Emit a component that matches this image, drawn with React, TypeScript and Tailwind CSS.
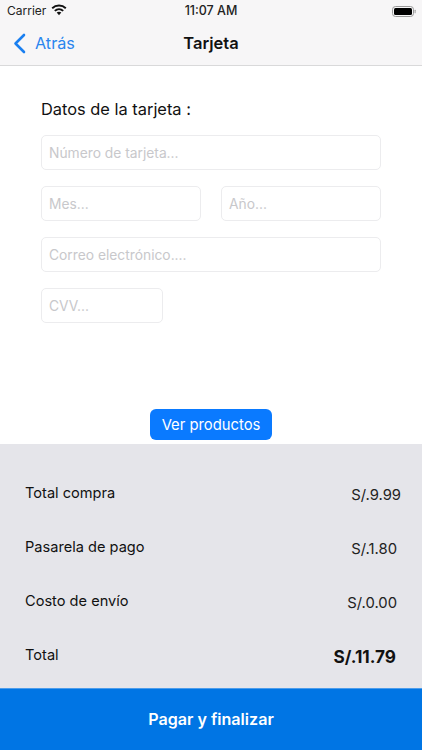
const font = { fontFamily: 'Inter, "Liberation Sans", sans-serif' };

function Field({ label, className }: { label: string; className: string }) {
  return (
    <div className={`h-[35px] rounded-[5px] border border-[#ececee] bg-white pl-[7px] pt-[2px] flex items-center text-[13.8px] text-[#c8c8cb] ${className}`}>
      {label}
    </div>
  );
}

function Row({ label, value, pr, bold, mt }: { label: string; value: string; pr: string; bold?: boolean; mt: string }) {
  return (
    <div className={`h-[24px] flex items-center justify-between pl-[25px] ${pr} ${mt}`}>
      <span className="text-[14.6px] text-[#111] translate-y-[1px]">{label}</span>
      <span className={bold ? "text-[17.2px] font-bold text-[#111] translate-y-[2px]" : "text-[14.8px] text-[#222] translate-y-[2px]"}>{value}</span>
    </div>
  );
}

export default function App() {
  return (
    <div style={font} className="w-[422px] h-[750px] overflow-hidden flex flex-col bg-white">
      <header className="h-[66px] shrink-0 bg-[#f7f6f7] border-b border-[#d9d9da] flex flex-col">
        <div className="h-[22px] flex items-center justify-between pl-[7px] pr-[6px] relative">
          <div className="flex items-center gap-[5px]">
            <span className="text-[12px] text-[#222]">Carrier</span>
            <svg width="16" height="12" viewBox="0 0 16 12" fill="none" stroke="#111" className="-translate-y-[1px]">
              <path d="M1.2 4.2C5 .6 11 .6 14.8 4.2" strokeWidth="1.9" />
              <path d="M3.8 6.9C6.2 4.7 9.8 4.7 12.2 6.9" strokeWidth="1.9" />
              <path d="M5.7 8.6C7 7.5 9 7.5 10.3 8.6L8 11.3Z" fill="#111" stroke="none" />
            </svg>
          </div>
          <span className="absolute left-0 right-0 text-center text-[12.5px] font-medium text-[#222]">11:07 AM</span>
          <svg width="24" height="11" viewBox="0 0 24 11">
            <rect x="0.5" y="0.5" width="21" height="10" rx="3" fill="none" stroke="#999" />
            <rect x="2" y="2" width="18" height="7" rx="1.5" fill="#000" />
            <rect x="22.6" y="3.8" width="1" height="3.4" rx="0.5" fill="#999" />
          </svg>
        </div>
        <div className="flex-1 flex items-center relative">
          <div className="flex items-center pl-[13px] gap-[9px] text-[#2a85ee]">
            <svg width="13" height="21" viewBox="0 0 13 21" fill="none" stroke="#1a7ff0" strokeWidth="2.6" strokeLinecap="round" strokeLinejoin="round">
              <path d="M11 2 L2.5 10.5 L11 19" />
            </svg>
            <span className="text-[16.2px]">Atrás</span>
          </div>
          <span className="absolute left-0 right-0 text-center text-[16.5px] font-semibold text-[#111]">Tarjeta</span>
        </div>
      </header>

      <main className="flex-1 flex flex-col px-[41px]">
        <h1 className="mt-[32px] h-[22px] flex items-center text-[16.4px] font-normal text-[#111]">Datos de la tarjeta :</h1>
        <div className="mt-[15px] flex flex-col gap-[16px]">
          <Field label="Número de tarjeta..." className="w-[340px]" />
          <div className="flex gap-[20px]">
            <Field label="Mes..." className="w-[160px]" />
            <Field label="Año..." className="w-[160px]" />
          </div>
          <Field label="Correo electrónico...." className="w-[340px]" />
          <Field label="CVV..." className="w-[122px]" />
        </div>
        <div className="mt-[86px] flex justify-center">
          <button className="w-[122px] h-[31px] pt-[2px] rounded-[6px] bg-[#0a7aff] text-white text-[14.8px]">Ver productos</button>
        </div>
      </main>

      <section className="h-[244px] shrink-0 bg-[#e5e5ea] pt-[37px]">
        <Row label="Total compra" value="S/.9.99" pr="pr-[21px]" mt="mt-0" />
        <Row label="Pasarela de pago" value="S/.1.80" pr="pr-[25px]" mt="mt-[30px]" />
        <Row label="Costo de envío" value="S/.0.00" pr="pr-[25px]" mt="mt-[30px]" />
        <Row label="Total" value="S/.11.79" pr="pr-[26px]" bold mt="mt-[30px]" />
      </section>

      <button className="h-[62px] shrink-0 bg-[#0075e4] border-t border-[#4c9ceb] text-white text-[16.1px] font-semibold">Pagar y finalizar</button>
    </div>
  );
}
